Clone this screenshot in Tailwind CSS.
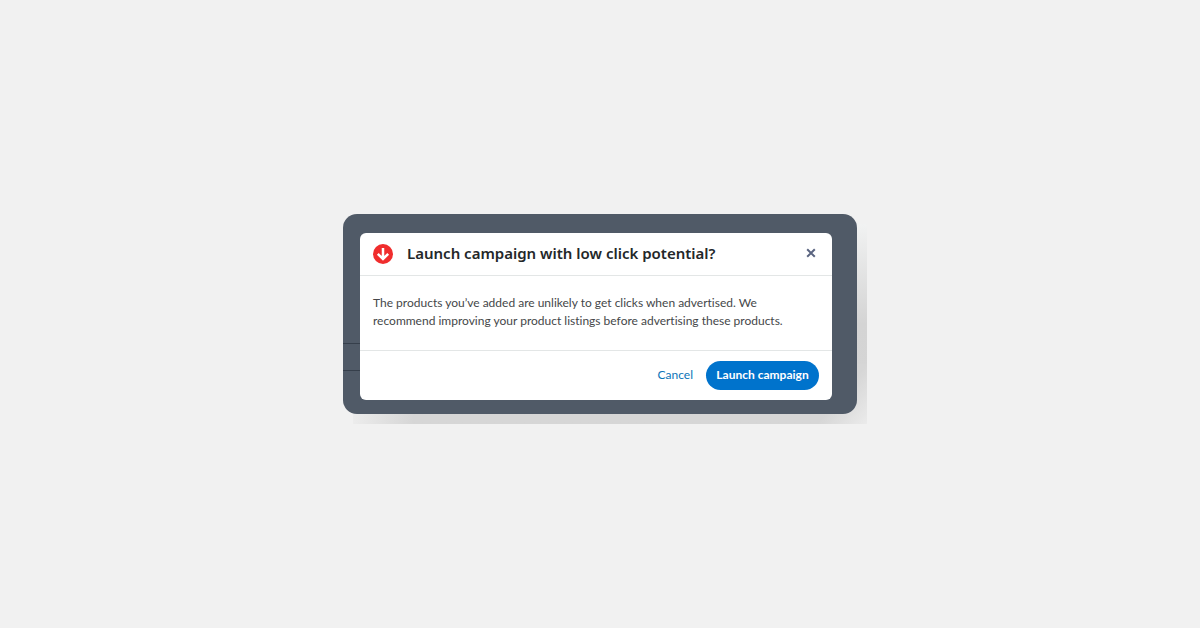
<!DOCTYPE html>
<html lang="en">
<head>
<meta charset="utf-8">
<title>Launch campaign</title>
<script src="https://cdn.jsdelivr.net/npm/@tailwindcss/browser@4"></script>
</head>
<body class="flex min-h-screen items-center justify-center bg-[#f1f1f1] font-['Lato','Noto_Sans',sans-serif] [font-variant-ligatures:none]">
<main class="relative w-full max-w-[514px]">
  <div class="absolute -right-[10px] top-[10px] -bottom-[10px] w-[30px] bg-linear-to-b from-[#f1f2f2] via-[#d4d4d4] via-50% to-[#d6d6d6]"></div>
  <div class="absolute left-[10px] right-0 -bottom-[10px] h-[24px] bg-linear-to-r from-[#ececec] via-[#d6d6d6] via-12% to-[#d6d6d6]"></div>
  <div class="absolute -right-[10px] -bottom-[10px] h-[60px] w-[50px] bg-linear-to-br from-[#d6d6d6] from-50% to-[#ebebeb]"></div>
  <div class="relative overflow-hidden rounded-[14px] bg-[#505a67] pt-[19px] pr-[25px] pb-[14px] pl-[17px]">
    <div class="absolute bottom-[43px] left-0 h-[28px] w-[17px] border-y border-[#363f4b]"></div>
    <section role="dialog" aria-labelledby="title" class="relative rounded-md bg-white">
      <header class="flex h-[43px] items-center border-b border-[#e3e6e6] px-[13px]">
        <svg class="size-5 shrink-0" viewBox="0 0 20 20" fill="none" aria-hidden="true">
          <circle cx="10" cy="10" r="10" fill="#f02d2d"/>
          <path d="M10 4v11M4.8 9.8l5.2 5.2 5.2-5.2" stroke="#fff" stroke-width="2.5"/>
        </svg>
        <h1 id="title" class="ml-[14px] flex-1 pb-0.5 font-['Noto_Sans',sans-serif] text-[15px] leading-5 font-semibold text-[#232729]">Launch campaign with low click potential?</h1>
        <button type="button" aria-label="Close" class="mb-0.5 flex size-4 items-center justify-center">
          <svg class="size-[10px]" viewBox="0 0 10 10" fill="none" aria-hidden="true"><path d="M1.2 1.2l7.6 7.6M8.8 1.2L1.2 8.8" stroke="#5a6480" stroke-width="2"/></svg>
        </button>
      </header>
      <p class="px-[13px] pt-[18px] pb-5 text-[12px] leading-[18px] text-[#454749]">The products you’ve added are unlikely to get clicks when advertised. We<br>recommend improving your product listings before advertising these products.</p>
      <footer class="flex h-[50px] items-center justify-end gap-[13px] border-t border-[#e3e6e6] px-[13px]">
        <button type="button" class="pb-0.5 text-[12px] leading-4 text-[#0b74b8]">Cancel</button>
        <button type="button" class="h-[29px] w-[113px] rounded-full bg-[#0073cc] pb-0.5 text-[12px] font-bold whitespace-nowrap text-white">Launch campaign</button>
      </footer>
    </section>
  </div>
</main>
</body>
</html>
